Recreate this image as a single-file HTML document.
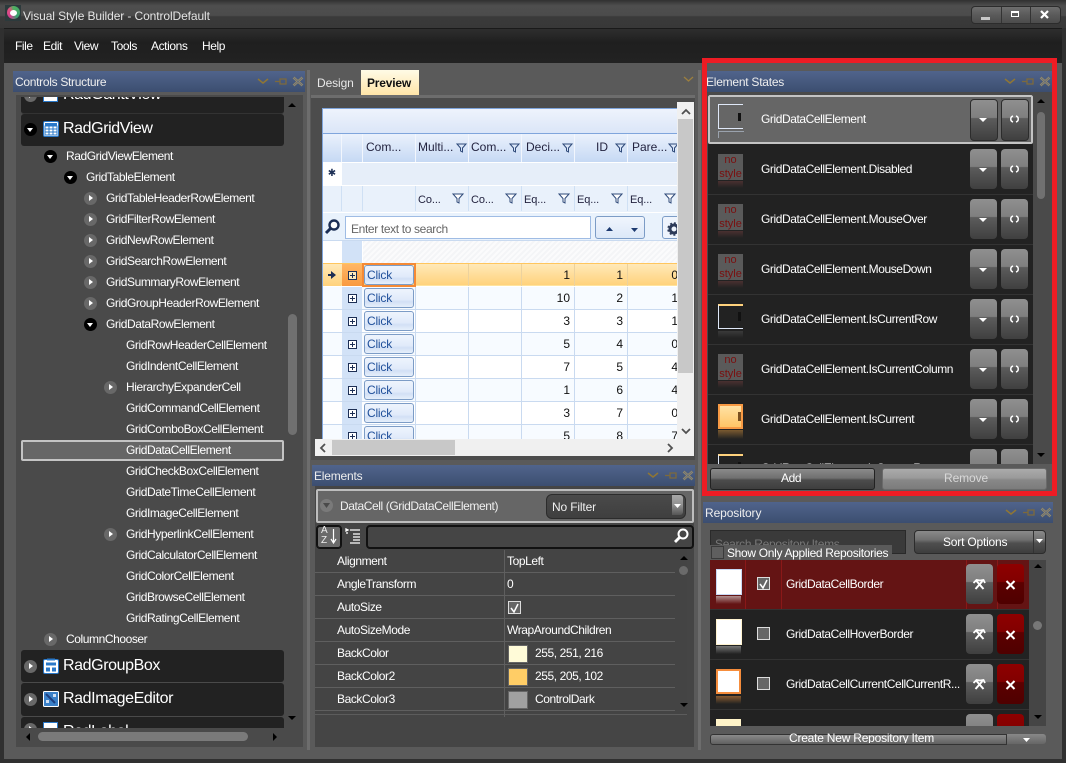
<!DOCTYPE html>
<html><head><meta charset="utf-8"><title>Visual Style Builder</title>
<style>
html,body{margin:0;padding:0;background:#303030}
#w{position:relative;width:1066px;height:763px;overflow:hidden;background:#303030;font-family:"Liberation Sans",sans-serif;font-size:12px;color:#fff}
#w div,#w span,#w svg{position:absolute;display:block}
.t{white-space:nowrap;line-height:16px;letter-spacing:-.42px;color:#fff}
.l{font-size:16px;line-height:20px;letter-spacing:-.4px}
.h{height:21px;background:linear-gradient(#50648c,#3c4e70)}
.h svg{right:0;top:0}
.c{width:13px;height:13px;border-radius:50%}
.k{background:#000}.g{background:#686868}
.k:after{content:"";position:absolute;left:3px;top:5px;border:solid transparent;border-width:4px 3.5px 0;border-top-color:#fff}
.g:after{content:"";position:absolute;left:5px;top:3px;border:solid transparent;border-width:3.5px 0 3.5px 4px;border-left-color:#fff}
.d{background:#222;border-radius:3px;left:21px;width:263px}
.b{width:27px;height:40px;border-radius:4px;background:linear-gradient(#8f8f8f,#7f7f7f 44%,#5c5c5c 46%,#3f3f3f)}
.r{background:linear-gradient(#8e0000,#820000 44%,#5c0000 46%,#4f0000)}
.rw{left:708px;width:325px;height:49px;background:#222;border-bottom:1px solid #333}
.ns{left:10px;top:9px;width:25px;height:26px;background:#5a5a5a;color:#7a1010;font-size:11px;line-height:13.5px;text-align:center}
.rf{left:10px;top:36px;width:25px;height:7px;background:linear-gradient(#4a3030,#222)}
.cell{top:0;height:22px;border-right:1px solid #c9daf0}
.row{left:0;width:355px;height:22px;border-bottom:1px solid #c9daf0}
.cl{left:41px;top:1px;width:48px;height:18px;border:1px solid #7c9cc6;border-radius:3px;background:linear-gradient(#eef4fd,#e0eafa 60%,#d2e0f5 70%,#e6effb);color:#1f4f9a;font-size:12px;line-height:18px;text-indent:2px;letter-spacing:-.2px}
.ex{left:25px;top:7px;width:7px;height:7px;border:1px solid #1d2f55;background:#fff}
.ex:before{content:"";position:absolute;left:1px;top:3px;width:5px;height:1px;background:#1d2f55}
.ex:after{content:"";position:absolute;left:3px;top:1px;width:1px;height:5px;background:#1d2f55}
.n{color:#111;text-align:right;width:30px;line-height:22px;letter-spacing:0}
.hc{top:0;height:28px;background:linear-gradient(#eaf1fc,#c6d9f4);border-right:1px solid #f2f6fd;color:#23233f;line-height:26px;letter-spacing:0;white-space:nowrap}
.fc{top:0;height:25px;border-right:1px solid #cfe0f4;color:#23233f;line-height:28px;white-space:nowrap;text-indent:2px;letter-spacing:-.1px;font-size:11px}
.pl{left:315px;width:360px;height:1px;background:#5f5f5f}
.sw{left:508px;width:18px;height:16px;border:1px solid #666}
.cb{width:11px;height:11px;border:1px solid #ddd;background:#666}
</style></head><body><div id="w">
<svg width="0" height="0" style="width:0;height:0"><defs>
<symbol id="hi" viewBox="0 0 50 21"><path d="M3 8l5 4 5-4" fill="none" stroke="#8f7635" stroke-width="1.500"/><path d="M20 10.500h5M25 8h6v5h-6z" fill="none" stroke="#7d6a3c" stroke-width="1.300"/><path d="M38.500 6.500l9 8M47.500 6.500l-9 8" stroke="#a08f60" stroke-width="2.400"/><path d="M38.500 6.500l9 8M47.500 6.500l-9 8" stroke="#50648c" stroke-width=".7"/></symbol>
<symbol id="dn" viewBox="0 0 27 40"><path d="M9 19h8l-4 4z" fill="#fff"/></symbol>
<symbol id="rf" viewBox="0 0 27 40"><path d="M12 17c-3 1-3 5 0 6M15 17c3 1 3 5 0 6" fill="none" stroke="#fff" stroke-width="1.500"/></symbol>
<symbol id="tl" viewBox="0 0 27 40"><path d="M9.500 25l7-8M17.500 25l-7-8" stroke="#fff" stroke-width="2" fill="none"/><path d="M7.500 19l3-3 3.500.5M14 16.500l3.500-.5 1.500 3" stroke="#fff" stroke-width="1.800" fill="none"/></symbol>
<symbol id="xx" viewBox="0 0 27 40"><path d="M9.500 17l8 8M17.500 17l-8 8" stroke="#fff" stroke-width="2"/></symbol>
</defs></svg>

<!-- title bar -->
<div style="left:0;top:0;width:1066px;height:28px;background:linear-gradient(#303030,#4e4e4e 20%,#4c4c4c 55%,#3a3a3a 60%,#383838)"></div>
<div style="left:5px;top:5px;width:16px;height:16px;background:#2c3a3c"></div>
<div style="left:7px;top:6px;width:13px;height:13px;border-radius:50%;background:conic-gradient(#50b060,#3aa070 40%,#d04090 60%,#e05080 85%,#50b060)"></div>
<div style="left:10px;top:10px;width:7px;height:6px;border-radius:50%;background:#fff"></div>
<div class="t" style="left:23px;top:8px;color:#e4e4e4;letter-spacing:-.1px">Visual Style Builder - ControlDefault</div>
<div style="left:971px;top:6px;width:88px;height:16px;border:1px solid #2c2c2c;border-radius:4px;background:linear-gradient(#6e6e6e,#5a5a5a 50%,#4c4c4c)"></div>
<div style="left:1001px;top:7px;width:1px;height:16px;background:#333"></div>
<div style="left:1030px;top:7px;width:1px;height:16px;background:#333"></div>
<div style="left:981px;top:17px;width:9px;height:3px;background:#c8c8c8"></div>
<div style="left:1011px;top:11px;border:1px solid #fff;border-top-width:2px;width:6px;height:3px"></div>
<svg style="left:1040px;top:10px" width="9" height="9"><path d="M1 1l7 7M8 1l-7 7" stroke="#fff" stroke-width="2.200"/></svg>

<!-- menu -->
<div style="left:4px;top:28px;width:1058px;height:34px;background:linear-gradient(#2e2e2e,#1f1f1f 40%,#222);border-top:1px solid #1a1a1a"></div>
<div class="t" style="left:15px;top:38px">File</div>
<div class="t" style="left:43px;top:38px">Edit</div>
<div class="t" style="left:74px;top:38px">View</div>
<div class="t" style="left:111px;top:38px">Tools</div>
<div class="t" style="left:151px;top:38px">Actions</div>
<div class="t" style="left:202px;top:38px">Help</div>

<!-- main bg -->
<div style="left:4px;top:63px;width:1058px;height:696px;background:#5a5a5a"></div>
<div style="left:307px;top:70px;width:3px;height:680px;background:#6d6d6d"></div>
<div style="left:698px;top:70px;width:3px;height:680px;background:#6d6d6d"></div>

<!-- left panel -->
<div class="h" style="left:13px;top:71px;width:292px"><svg width="50" height="21"><use href="#hi"/></svg></div>
<div class="t" style="left:15px;top:74px;color:#eee;letter-spacing:-.3px">Controls Structure</div>
<div style="left:16px;top:95px;width:287px;height:652px;background:#4a4a4a"></div>
<div style="left:16px;top:97px;width:268px;height:631px;overflow:hidden">
 <div class="d" style="left:5px;top:-5px;width:263px;height:21px;border-bottom:1px solid #333"></div>
 <div class="c g" style="left:8px;top:-8px"></div>
 <div style="left:27px;top:-9px;width:13px;height:12px;background:#fff;border:1px solid #2a78c8"></div>
 <div class="t l" style="left:47px;top:-12px">RadGanttView</div>
 <div class="d" style="left:5px;top:17px;width:263px;height:32px"></div>
 <div class="c k" style="left:8px;top:26px"></div>
 <svg style="left:27px;top:24px" width="16" height="16"><rect x=".5" y=".5" width="15" height="15" rx="1.500" fill="#fff" stroke="#2a78c8"/><path d="M2 2h12v3H2z" fill="#2a78c8"/><path d="M2 5h12v9H2zM2 8h12M2 11h12M6 5v9M10 5v9" fill="none" stroke="#2a78c8"/></svg>
 <div class="t l" style="left:47px;top:22px">RadGridView</div>
</div>
<div class="c k" style="left:44px;top:150px"></div><div class="t" style="left:66px;top:148px">RadGridViewElement</div>
<div class="c k" style="left:64px;top:171px"></div><div class="t" style="left:86px;top:169px">GridTableElement</div>
<div class="c g" style="left:84px;top:192px"></div><div class="t" style="left:106px;top:190px">GridTableHeaderRowElement</div>
<div class="c g" style="left:84px;top:213px"></div><div class="t" style="left:106px;top:211px">GridFilterRowElement</div>
<div class="c g" style="left:84px;top:234px"></div><div class="t" style="left:106px;top:232px">GridNewRowElement</div>
<div class="c g" style="left:84px;top:255px"></div><div class="t" style="left:106px;top:253px">GridSearchRowElement</div>
<div class="c g" style="left:84px;top:276px"></div><div class="t" style="left:106px;top:274px">GridSummaryRowElement</div>
<div class="c g" style="left:84px;top:297px"></div><div class="t" style="left:106px;top:295px">GridGroupHeaderRowElement</div>
<div class="c k" style="left:84px;top:318px"></div><div class="t" style="left:106px;top:316px">GridDataRowElement</div>
<div class="t" style="left:126px;top:337px">GridRowHeaderCellElement</div>
<div class="t" style="left:126px;top:358px">GridIndentCellElement</div>
<div class="c g" style="left:104px;top:381px"></div><div class="t" style="left:126px;top:379px">HierarchyExpanderCell</div>
<div class="t" style="left:126px;top:400px">GridCommandCellElement</div>
<div class="t" style="left:126px;top:421px">GridComboBoxCellElement</div>
<div style="left:21px;top:440px;width:259px;height:17px;background:#666;border:2px solid #c4c4c4;border-radius:2px"></div>
<div class="t" style="left:126px;top:442px">GridDataCellElement</div>
<div class="t" style="left:126px;top:463px">GridCheckBoxCellElement</div>
<div class="t" style="left:126px;top:484px">GridDateTimeCellElement</div>
<div class="t" style="left:126px;top:505px">GridImageCellElement</div>
<div class="c g" style="left:104px;top:528px"></div><div class="t" style="left:126px;top:526px">GridHyperlinkCellElement</div>
<div class="t" style="left:126px;top:547px">GridCalculatorCellElement</div>
<div class="t" style="left:126px;top:568px">GridColorCellElement</div>
<div class="t" style="left:126px;top:589px">GridBrowseCellElement</div>
<div class="t" style="left:126px;top:610px">GridRatingCellElement</div>
<div class="c g" style="left:44px;top:633px"></div><div class="t" style="left:66px;top:631px">ColumnChooser</div>
<div class="d" style="top:650px;height:32px"></div>
<div class="c g" style="left:24px;top:660px"></div>
<svg style="left:43px;top:658px" width="16" height="16"><rect x=".5" y="1.500" width="15" height="14" rx="1.500" fill="#fff" stroke="#2a78c8"/><path d="M4 .5h8v2H4z" fill="#2a78c8"/><path d="M3 4.500h10v3H3z" fill="#2a78c8"/><path d="M3 9.500h4v4H3zM9 9.500h4v4H9z" fill="#2a78c8"/></svg>
<div class="t l" style="left:63px;top:656px">RadGroupBox</div>
<div class="d" style="top:683px;height:33px"></div>
<div class="c g" style="left:24px;top:693px"></div>
<svg style="left:43px;top:691px" width="16" height="16"><rect x=".5" y=".5" width="15" height="15" rx="1" fill="#3a80c8" stroke="#fff"/><path d="M3 3l9 9" stroke="#1d3f80" stroke-width="2"/><path d="M3 12h3v-3H3zM10 3h3v3h-3z" fill="#cfe0f4"/></svg>
<div class="t l" style="left:63px;top:689px">RadImageEditor</div>
<div style="left:21px;top:717px;width:263px;height:11px;overflow:hidden;background:#222;border-radius:3px 3px 0 0">
 <div class="c g" style="left:3px;top:6px"></div>
 <div style="left:22px;top:5px;width:13px;height:13px;background:#fff;border:1px solid #2a78c8"></div>
 <div class="t l" style="left:42px;top:5px">RadLabel</div>
</div>
<svg style="left:287px;top:102px" width="10" height="6"><path d="M1 5h8L5 1z" fill="#000"/></svg>
<svg style="left:287px;top:715px" width="10" height="6"><path d="M1 1h8L5 5z" fill="#000"/></svg>
<div style="left:288px;top:314px;width:9px;height:121px;border-radius:5px;background:#707070"></div>
<svg style="left:25px;top:732px" width="6" height="10"><path d="M5 1v8L1 5z" fill="#000"/></svg>
<svg style="left:272px;top:732px" width="6" height="10"><path d="M1 1v8l4-4z" fill="#000"/></svg>
<div style="left:38px;top:732px;width:210px;height:9px;border-radius:5px;background:#7a7a7a"></div>

<!-- center tabs -->
<div class="t" style="left:317px;top:75px;color:#e8e8e8;letter-spacing:-.1px">Design</div>
<div style="left:361px;top:70px;width:58px;height:25px;background:linear-gradient(#fffbe6,#ffe5a8)"></div>
<div class="t" style="left:367px;top:75px;color:#111;font-weight:bold;letter-spacing:-.2px">Preview</div>
<svg style="left:683px;top:76px" width="11" height="7"><path d="M1 1l4.500 4 4.500-4" fill="none" stroke="#9c7f3f" stroke-width="1.300"/></svg>
<div style="left:311px;top:95px;width:384px;height:3px;background:#6d6d6d"></div>
<div style="left:311px;top:98px;width:384px;height:362px;background:#4c4c4c"></div>

<!-- grid -->
<div style="left:322px;top:108px;width:355px;height:331px;overflow:hidden;background:#fff;border-left:1px solid #7fa5dc;border-top:1px solid #7fa5dc;box-sizing:border-box">
 <div style="left:0;top:0;width:355px;height:24px;background:linear-gradient(#eef3fc,#dbe6f8);border-bottom:1px solid #7fa5dc"></div>
 <div style="left:0;top:25px;width:355px;height:28px">
  <div class="hc" style="left:0;width:18px"></div>
  <div class="hc" style="left:19px;width:20px"></div>
  <div class="hc" style="left:40px;width:52px;text-indent:3px">Com...</div>
  <div class="hc" style="left:93px;width:52px;text-indent:2px">Multi...</div>
  <div class="hc" style="left:146px;width:52px;text-indent:2px">Com...</div>
  <div class="hc" style="left:199px;width:52px;text-indent:4px">Deci...</div>
  <div class="hc" style="left:252px;width:52px;text-indent:21px">ID</div>
  <div class="hc" style="left:305px;width:52px;text-indent:4px">Pare...</div>
  <svg style="left:133px;top:9px" width="12" height="10"><path d="M1 1h9L6.500 5v4l-2-1V5z" fill="none" stroke="#2f4a7a"/></svg>
  <svg style="left:186px;top:9px" width="12" height="10"><path d="M1 1h9L6.500 5v4l-2-1V5z" fill="none" stroke="#2f4a7a"/></svg>
  <svg style="left:239px;top:9px" width="12" height="10"><path d="M1 1h9L6.500 5v4l-2-1V5z" fill="none" stroke="#2f4a7a"/></svg>
  <svg style="left:292px;top:9px" width="12" height="10"><path d="M1 1h9L6.500 5v4l-2-1V5z" fill="none" stroke="#2f4a7a"/></svg>
  <svg style="left:345px;top:9px" width="12" height="10"><path d="M1 1h9L6.500 5v4l-2-1V5z" fill="none" stroke="#2f4a7a"/></svg>
 </div>
 <div style="left:0;top:54px;width:18px;height:22px;background:#fff;color:#1d2f55;text-align:center;line-height:21px;font-size:10px;font-family:'DejaVu Sans',sans-serif">✱</div>
 <div style="left:19px;top:54px;width:336px;height:22px;background:#e6eef9"></div>
 <div style="left:0;top:77px;width:355px;height:26px;background:#e9f1fb">
  <div class="fc" style="left:0;width:18px"></div><div class="fc" style="left:19px;width:20px"></div><div class="fc" style="left:40px;width:52px"></div>
  <div class="fc" style="left:93px;width:52px">Co...</div><div class="fc" style="left:146px;width:52px">Co...</div>
  <div class="fc" style="left:199px;width:52px">Eq...</div><div class="fc" style="left:252px;width:52px">Eq...</div><div class="fc" style="left:305px;width:52px">Eq...</div>
  <svg style="left:129px;top:7px" width="12" height="11"><path d="M1 1h10L7 5.500v4.500l-2-1V5.500z" fill="#fff" stroke="#2f4a7a"/></svg>
  <svg style="left:182px;top:7px" width="12" height="11"><path d="M1 1h10L7 5.500v4.500l-2-1V5.500z" fill="#fff" stroke="#2f4a7a"/></svg>
  <svg style="left:235px;top:7px" width="12" height="11"><path d="M1 1h10L7 5.500v4.500l-2-1V5.500z" fill="#fff" stroke="#2f4a7a"/></svg>
  <svg style="left:288px;top:7px" width="12" height="11"><path d="M1 1h10L7 5.500v4.500l-2-1V5.500z" fill="#fff" stroke="#2f4a7a"/></svg>
  <svg style="left:341px;top:7px" width="12" height="11"><path d="M1 1h10L7 5.500v4.500l-2-1V5.500z" fill="#fff" stroke="#2f4a7a"/></svg>
 </div>
 <div style="left:0;top:104px;width:355px;height:27px;background:#e9f2fc;border-bottom:1px solid #c9daf0">
  <svg style="left:1px;top:5px" width="17" height="18"><circle cx="10" cy="7" r="4.500" fill="#fff" stroke="#1d2f55" stroke-width="2.400"/><path d="M7 10l-5 5" stroke="#1d2f55" stroke-width="3"/></svg>
  <div style="left:22px;top:3px;width:244px;height:21px;background:#fff;border:1px solid #9fbce4"></div>
  <div class="t" style="left:28px;top:8px;color:#666;letter-spacing:-.36px">Enter text to search</div>
  <div style="left:272px;top:3px;width:24px;height:21px;border:1px solid #7c9cc6;border-radius:3px 0 0 3px;background:linear-gradient(#f0f5fd,#dce8f8)"></div>
  <div style="left:297px;top:3px;width:24px;height:21px;border:1px solid #7c9cc6;border-left:0;border-radius:0 3px 3px 0;background:linear-gradient(#f0f5fd,#dce8f8)"></div>
  <svg style="left:282px;top:13px" width="9" height="6"><path d="M1 5h7L4.500 1z" fill="#1d3a70"/></svg>
  <svg style="left:307px;top:14px" width="9" height="6"><path d="M1 1h7L4.500 5z" fill="#1d3a70"/></svg>
  <div style="left:339px;top:3px;width:26px;height:21px;border:1px solid #7c9cc6;border-radius:3px;background:#eef4fd"></div>
  <svg style="left:344px;top:9px" width="14" height="14"><circle cx="7" cy="7" r="4" fill="none" stroke="#2c3a58" stroke-width="3"/><circle cx="7" cy="7" r="6" fill="none" stroke="#2c3a58" stroke-width="1.500" stroke-dasharray="2 2"/></svg>
 </div>
 <div style="left:19px;top:132px;width:20px;height:22px;background:#d2e2f7"></div>
 <div style="left:40px;top:132px;width:315px;height:22px;background:repeating-linear-gradient(135deg,#f4f5f7 0 2px,#fbfbfc 2px 4px)"></div>

 <div class="row" style="top:154px;height:23px;background:linear-gradient(#ffe9b8,#ffd27c);border-top:1px solid #ffc65e;border-bottom:1px solid #ffe49e;box-sizing:border-box">
  <div style="left:0;top:0;width:18px;height:22px;background:linear-gradient(#ffe9b8,#ffd27c)"></div>
  <svg style="left:5px;top:7px" width="9" height="11"><path d="M0 3h3V0l5 4L3 8V5H0z" fill="#1d2f55"/></svg>
  <div style="left:19px;top:0;width:20px;height:22px;background:linear-gradient(#ffb766,#f99a3f)"></div><div class="ex" style="background:#ffe9b8"></div>
  <div style="left:39px;top:-1px;width:50px;height:20px;border:2px solid #f58a35"></div><div class="cl" style="left:41px;top:1px;height:18px;line-height:18px">Click</div>
  <div class="cell" style="left:145px;width:0;border-color:#ecd29e"></div><div class="cell" style="left:198px;width:0;border-color:#ecd29e"></div><div class="cell" style="left:251px;width:0;border-color:#ecd29e"></div><div class="cell" style="left:304px;width:0;border-color:#ecd29e"></div>
  <div class="n" style="left:217px">1</div><div class="n" style="left:270px">1</div><div class="n" style="left:325px">0</div>
 </div>
 <div class="row" style="top:178px;background:#f7fbff"><div style="left:19px;top:0;width:20px;height:22px;background:#d2e2f7"></div><div class="ex"></div><div class="cl">Click</div><div class="cell" style="left:92px;width:0"></div><div class="cell" style="left:145px;width:0"></div><div class="cell" style="left:198px;width:0"></div><div class="cell" style="left:251px;width:0"></div><div class="cell" style="left:304px;width:0"></div><div class="n" style="left:217px">10</div><div class="n" style="left:270px">2</div><div class="n" style="left:325px">1</div></div>
 <div class="row" style="top:201px;background:#fff"><div style="left:19px;top:0;width:20px;height:22px;background:#d2e2f7"></div><div class="ex"></div><div class="cl">Click</div><div class="cell" style="left:92px;width:0"></div><div class="cell" style="left:145px;width:0"></div><div class="cell" style="left:198px;width:0"></div><div class="cell" style="left:251px;width:0"></div><div class="cell" style="left:304px;width:0"></div><div class="n" style="left:217px">3</div><div class="n" style="left:270px">3</div><div class="n" style="left:325px">1</div></div>
 <div class="row" style="top:224px;background:#f7fbff"><div style="left:19px;top:0;width:20px;height:22px;background:#d2e2f7"></div><div class="ex"></div><div class="cl">Click</div><div class="cell" style="left:92px;width:0"></div><div class="cell" style="left:145px;width:0"></div><div class="cell" style="left:198px;width:0"></div><div class="cell" style="left:251px;width:0"></div><div class="cell" style="left:304px;width:0"></div><div class="n" style="left:217px">5</div><div class="n" style="left:270px">4</div><div class="n" style="left:325px">0</div></div>
 <div class="row" style="top:247px;background:#fff"><div style="left:19px;top:0;width:20px;height:22px;background:#d2e2f7"></div><div class="ex"></div><div class="cl">Click</div><div class="cell" style="left:92px;width:0"></div><div class="cell" style="left:145px;width:0"></div><div class="cell" style="left:198px;width:0"></div><div class="cell" style="left:251px;width:0"></div><div class="cell" style="left:304px;width:0"></div><div class="n" style="left:217px">7</div><div class="n" style="left:270px">5</div><div class="n" style="left:325px">4</div></div>
 <div class="row" style="top:270px;background:#f7fbff"><div style="left:19px;top:0;width:20px;height:22px;background:#d2e2f7"></div><div class="ex"></div><div class="cl">Click</div><div class="cell" style="left:92px;width:0"></div><div class="cell" style="left:145px;width:0"></div><div class="cell" style="left:198px;width:0"></div><div class="cell" style="left:251px;width:0"></div><div class="cell" style="left:304px;width:0"></div><div class="n" style="left:217px">1</div><div class="n" style="left:270px">6</div><div class="n" style="left:325px">4</div></div>
 <div class="row" style="top:293px;background:#fff"><div style="left:19px;top:0;width:20px;height:22px;background:#d2e2f7"></div><div class="ex"></div><div class="cl">Click</div><div class="cell" style="left:92px;width:0"></div><div class="cell" style="left:145px;width:0"></div><div class="cell" style="left:198px;width:0"></div><div class="cell" style="left:251px;width:0"></div><div class="cell" style="left:304px;width:0"></div><div class="n" style="left:217px">3</div><div class="n" style="left:270px">7</div><div class="n" style="left:325px">0</div></div>
 <div class="row" style="top:316px;background:#f7fbff"><div style="left:19px;top:0;width:20px;height:22px;background:#d2e2f7"></div><div class="ex"></div><div class="cl">Click</div><div class="cell" style="left:92px;width:0"></div><div class="cell" style="left:145px;width:0"></div><div class="cell" style="left:198px;width:0"></div><div class="cell" style="left:251px;width:0"></div><div class="cell" style="left:304px;width:0"></div><div class="n" style="left:217px">5</div><div class="n" style="left:270px">8</div><div class="n" style="left:325px">7</div></div>
</div>
<!-- grid scrollbars -->
<div style="left:677px;top:102px;width:17px;height:354px;background:#f0f0f0"></div>
<div style="left:678px;top:119px;width:15px;height:254px;background:#c8c8c8"></div>
<svg style="left:681px;top:108px" width="10" height="7"><path d="M1 6l4-4 4 4" fill="none" stroke="#505050" stroke-width="1.800"/></svg>
<svg style="left:681px;top:428px" width="10" height="7"><path d="M1 1l4 4 4-4" fill="none" stroke="#505050" stroke-width="1.800"/></svg>
<div style="left:315px;top:439px;width:379px;height:17px;background:#f0f0f0"></div>
<div style="left:332px;top:440px;width:123px;height:15px;background:#c8c8c8"></div>
<svg style="left:319px;top:443px" width="7" height="10"><path d="M6 1L2 5l4 4" fill="none" stroke="#505050" stroke-width="1.800"/></svg>
<svg style="left:667px;top:443px" width="7" height="10"><path d="M1 1l4 4-4 4" fill="none" stroke="#505050" stroke-width="1.800"/></svg>

<!-- elements panel -->
<div class="h" style="left:312px;top:465px;width:383px"><svg width="50" height="21"><use href="#hi"/></svg></div>
<div class="t" style="left:314px;top:468px;color:#eee;letter-spacing:-.2px">Elements</div>
<div style="left:315px;top:486px;width:379px;height:261px;background:#454545"></div>
<div style="left:316px;top:489px;width:374px;height:30px;background:#666;border:2px solid #bdbdbd;border-radius:2px"></div>
<div class="c" style="left:320px;top:499px;background:#7a7a7a"></div>
<svg style="left:322px;top:502px" width="9" height="7"><path d="M1 1h7L4.500 6z" fill="#4a4a4a"/></svg>
<div class="t" style="left:340px;top:498px;color:#f0f0f0;letter-spacing:-.4px">DataCell (GridDataCellElement)</div>
<div style="left:546px;top:494px;width:138px;height:23px;border:1px solid #2c2c2c;border-radius:6px;background:linear-gradient(#4a4a4a,#3f3f3f)"></div>
<div style="left:672px;top:495px;width:11px;height:20px;border-radius:0 3px 3px 0;background:linear-gradient(#a8a8a8,#909090 50%,#555)"></div>
<svg style="left:673px;top:504px" width="9" height="5"><path d="M1 0h7L4.500 4z" fill="#fff"/></svg>
<div class="t" style="left:552px;top:499px;color:#f0f0f0;letter-spacing:-.15px">No Filter</div>
<div style="left:317px;top:526px;width:22px;height:20px;border:1px solid #111;border-radius:3px;background:#6a6a6a;outline:1px solid #111"></div>
<div class="t" style="left:321px;top:526px;font-size:10px;line-height:10px;letter-spacing:0;color:#eee">A<br>Z</div>
<svg style="left:330px;top:528px" width="7" height="17"><path d="M3.500 1v13M1 11l2.500 4L6 11" fill="none" stroke="#fff" stroke-width="1.200"/></svg>
<svg style="left:345px;top:528px" width="16" height="16"><path d="M5 2h10M8 6h7M8 9h7M8 12h7M5 15h10M1 1l2 1-2 1zM1 5h2" stroke="#fff" stroke-width="1.300" fill="none"/></svg>
<div style="left:366px;top:525px;width:324px;height:20px;border:2px solid #111;border-radius:4px;background:#454545"></div>
<svg style="left:673px;top:527px" width="17" height="18"><circle cx="10" cy="7" r="4.500" fill="none" stroke="#fff" stroke-width="2"/><path d="M7 10l-5 5" stroke="#fff" stroke-width="2.800"/></svg>
<div style="left:315px;top:549px;width:372px;height:165px;background:#444;border-bottom:1px solid #5c5c5c"></div>
<div style="left:504px;top:550px;width:1px;height:167px;background:#5f5f5f"></div>
<div class="pl" style="top:572px"></div><div class="pl" style="top:595px"></div><div class="pl" style="top:618px"></div><div class="pl" style="top:641px"></div><div class="pl" style="top:664px"></div><div class="pl" style="top:687px"></div><div class="pl" style="top:710px"></div>
<div class="t" style="left:337px;top:553px">Alignment</div><div class="t" style="left:507px;top:553px">TopLeft</div>
<div class="t" style="left:337px;top:576px">AngleTransform</div><div class="t" style="left:507px;top:576px">0</div>
<div class="t" style="left:337px;top:599px">AutoSize</div>
<div class="cb" style="left:508px;top:601px"></div><svg style="left:509px;top:602px" width="12" height="12"><path d="M2 6l3 4 4-8" fill="none" stroke="#fff" stroke-width="1.500"/></svg>
<div class="t" style="left:337px;top:622px">AutoSizeMode</div><div class="t" style="left:507px;top:622px">WrapAroundChildren</div>
<div class="t" style="left:337px;top:645px">BackColor</div><div class="sw" style="top:645px;background:#fffbd8"></div><div class="t" style="left:535px;top:645px">255, 251, 216</div>
<div class="t" style="left:337px;top:668px">BackColor2</div><div class="sw" style="top:668px;background:#ffcd66"></div><div class="t" style="left:535px;top:668px">255, 205, 102</div>
<div class="t" style="left:337px;top:691px">BackColor3</div><div class="sw" style="top:691px;background:#a0a0a0"></div><div class="t" style="left:535px;top:691px">ControlDark</div>
<svg style="left:679px;top:555px" width="10" height="6"><path d="M1 5h8L5 1z" fill="#000"/></svg>
<svg style="left:679px;top:702px" width="10" height="6"><path d="M1 1h8L5 5z" fill="#000"/></svg>
<div class="c" style="left:679px;top:566px;width:9px;height:9px;background:#6a6a6a"></div>

<!-- element states -->
<div class="h" style="left:707px;top:71px;width:345px"><svg width="50" height="21"><use href="#hi"/></svg></div>
<div class="t" style="left:706px;top:74px;color:#eee;letter-spacing:-.24px">Element States</div>
<div style="left:707px;top:92px;width:345px;height:372px;background:#4a4a4a"></div>
<div style="left:708px;top:95px;width:325px;height:369px;background:#222;overflow:hidden">
 <div class="rw" style="left:0;top:0;width:321px;height:45px;background:#666;border:2px solid #c4c4c4;border-radius:2px">
  <div style="left:8px;top:7px;width:24px;height:23px;border:1px solid #dfe8f8;border-right:0"></div>
  <div style="left:8px;top:34px;width:25px;height:6px;border:1px solid #9aa2ad;border-right:0;border-bottom:0"></div>
  <div style="left:28px;top:16px;width:3px;height:8px;background:#111"></div>
 </div>
 <div class="rw" style="left:0;top:50px"><div class="ns">no<br>style</div><div class="rf"></div></div>
 <div class="rw" style="left:0;top:100px"><div class="ns">no<br>style</div><div class="rf"></div></div>
 <div class="rw" style="left:0;top:150px"><div class="ns">no<br>style</div><div class="rf"></div></div>
 <div class="rw" style="left:0;top:200px">
  <div style="left:10px;top:9px;width:25px;height:25px;border:1px solid #dfe8f8;border-top:2px solid #ffd27c;border-right:0;box-sizing:border-box"></div>
  <div style="left:30px;top:17px;width:3px;height:9px;background:#111"></div>
  <div class="rf" style="background:linear-gradient(#3a3a3a,#222)"></div>
 </div>
 <div class="rw" style="left:0;top:250px"><div class="ns">no<br>style</div><div class="rf"></div></div>
 <div class="rw" style="left:0;top:300px">
  <div style="left:10px;top:9px;width:25px;height:25px;background:linear-gradient(#ffe2a4,#ffc566);border:2px solid #f89a44;box-sizing:border-box"></div>
  <div style="left:30px;top:17px;width:3px;height:9px;background:#7a5020"></div>
  <div class="rf" style="top:35px;height:9px;background:linear-gradient(#7a5a30,#222)"></div>
 </div>
 <div class="rw" style="left:0;top:350px">
  <div style="left:10px;top:9px;width:25px;height:25px;border:1px solid #dfe8f8;border-top:2px solid #ffd27c;border-right:0;box-sizing:border-box"></div>
  <div style="left:30px;top:17px;width:3px;height:6px;background:#111"></div>
 </div>
 <div class="t" style="left:53px;top:365px">GridRowCellElement.IsCurrentRow</div>
 <div class="b" style="left:262px;top:354px"></div><div class="b" style="left:293px;top:354px"></div>
</div>
<div class="t" style="left:761px;top:111px">GridDataCellElement</div>
<div class="t" style="left:761px;top:161px">GridDataCellElement.Disabled</div>
<div class="t" style="left:761px;top:211px">GridDataCellElement.MouseOver</div>
<div class="t" style="left:761px;top:261px">GridDataCellElement.MouseDown</div>
<div class="t" style="left:761px;top:311px">GridDataCellElement.IsCurrentRow</div>
<div class="t" style="left:761px;top:361px">GridDataCellElement.IsCurrentColumn</div>
<div class="t" style="left:761px;top:411px">GridDataCellElement.IsCurrent</div>
<div class="b" style="left:970px;top:99px;border:1px solid #2c2c2c;width:26px"></div><svg class="b0" style="left:970px;top:99px" width="27" height="40"><use href="#dn"/></svg>
<div class="b" style="left:1001px;top:99px;border:1px solid #2c2c2c;width:26px"></div><svg style="left:1001px;top:99px" width="27" height="40"><use href="#rf"/></svg>
<div class="b" style="left:970px;top:149px"></div><svg style="left:970px;top:149px" width="27" height="40"><use href="#dn"/></svg><div class="b" style="left:1001px;top:149px"></div><svg style="left:1001px;top:149px" width="27" height="40"><use href="#rf"/></svg>
<div class="b" style="left:970px;top:199px"></div><svg style="left:970px;top:199px" width="27" height="40"><use href="#dn"/></svg><div class="b" style="left:1001px;top:199px"></div><svg style="left:1001px;top:199px" width="27" height="40"><use href="#rf"/></svg>
<div class="b" style="left:970px;top:249px"></div><svg style="left:970px;top:249px" width="27" height="40"><use href="#dn"/></svg><div class="b" style="left:1001px;top:249px"></div><svg style="left:1001px;top:249px" width="27" height="40"><use href="#rf"/></svg>
<div class="b" style="left:970px;top:299px"></div><svg style="left:970px;top:299px" width="27" height="40"><use href="#dn"/></svg><div class="b" style="left:1001px;top:299px"></div><svg style="left:1001px;top:299px" width="27" height="40"><use href="#rf"/></svg>
<div class="b" style="left:970px;top:349px"></div><svg style="left:970px;top:349px" width="27" height="40"><use href="#dn"/></svg><div class="b" style="left:1001px;top:349px"></div><svg style="left:1001px;top:349px" width="27" height="40"><use href="#rf"/></svg>
<div class="b" style="left:970px;top:399px"></div><svg style="left:970px;top:399px" width="27" height="40"><use href="#dn"/></svg><div class="b" style="left:1001px;top:399px"></div><svg style="left:1001px;top:399px" width="27" height="40"><use href="#rf"/></svg>
<svg style="left:1036px;top:98px" width="10" height="6"><path d="M1 5h8L5 1z" fill="#000"/></svg>
<svg style="left:1036px;top:452px" width="10" height="6"><path d="M1 1h8L5 5z" fill="#000"/></svg>
<div style="left:1037px;top:112px;width:8px;height:87px;border-radius:4px;background:#707070"></div>
<div style="left:707px;top:464px;width:345px;height:27px;background:#5a5a5a"></div>
<div style="left:710px;top:468px;width:163px;height:20px;border:1px solid #222;border-radius:3px;background:linear-gradient(#8a8a8a,#707070 45%,#4c4c4c 55%,#3e3e3e)"></div>
<div class="t" style="left:781px;top:470px">Add</div>
<div style="left:882px;top:468px;width:163px;height:20px;border:1px solid #6a6a6a;border-radius:3px;background:linear-gradient(#ababab,#9a9a9a 45%,#888 55%,#7c7c7c)"></div>
<div class="t" style="left:944px;top:470px;color:#d8d8d8;letter-spacing:-.1px">Remove</div>
<!-- red frame -->
<div style="left:702px;top:58px;width:345px;height:428px;border:5px solid #ed1c24"></div>

<!-- repository -->
<div class="h" style="left:703px;top:502px;width:350px"><svg width="50" height="21"><use href="#hi"/></svg></div>
<div class="t" style="left:705px;top:505px;color:#eee;letter-spacing:-.1px">Repository</div>
<div style="left:710px;top:530px;width:196px;height:24px;background:#3a3a3a;border:1px solid #2a2a2a;box-sizing:border-box"></div>
<div class="t" style="left:715px;top:536px;color:#777;letter-spacing:-.3px">Search Repository Items</div>
<div style="left:914px;top:530px;width:132px;height:24px;box-sizing:border-box;border:1px solid #2c2c2c;border-radius:4px;background:linear-gradient(#8a8a8a,#707070 40%,#4f4f4f 55%,#3e3e3e)"></div>
<div style="left:1033px;top:531px;width:1px;height:22px;background:#333"></div>
<div class="t" style="left:943px;top:534px;letter-spacing:-.2px">Sort Options</div>
<svg style="left:1035px;top:539px" width="9" height="5"><path d="M1 0h7L4.500 4z" fill="#fff"/></svg>
<div style="left:710px;top:545px;width:182px;height:16px;background:#5a5a5a"></div>
<div class="cb" style="left:711px;top:546px;border-color:#3a3a3a;background:#5f5f5f"></div>
<div class="t" style="left:727px;top:545px;letter-spacing:-.32px">Show Only Applied Repositories</div>
<div style="left:710px;top:560px;width:336px;height:166px;background:#454545"></div>
<div style="left:710px;top:560px;width:319px;height:166px;background:#222;overflow:hidden">
 <div style="left:0;top:0;width:319px;height:49px;background:#641414;border-bottom:1px solid #333"></div>
 <div style="left:35px;top:0;width:1px;height:49px;background:#8a1818"></div>
 <div style="left:71px;top:0;width:1px;height:49px;background:#8a1818"></div>
 <div style="left:256px;top:0;width:1px;height:49px;background:#8a1818"></div>
 <div style="left:287px;top:0;width:1px;height:49px;background:#8a1818"></div>
 <div style="left:6px;top:9px;width:24px;height:24px;background:#fff;border:1px solid #c8d8f4"></div>
 <div style="left:6px;top:36px;width:25px;height:8px;background:linear-gradient(#b09090,#641414)"></div>
 <div style="left:0;top:99px;width:319px;height:1px;background:#333"></div>
 <div style="left:0;top:149px;width:319px;height:1px;background:#333"></div>
 <div style="left:6px;top:59px;width:24px;height:24px;background:#fff;border:1px solid #fff3d0"></div>
 <div style="left:6px;top:86px;width:25px;height:8px;background:linear-gradient(#777,#222)"></div>
 <div style="left:6px;top:109px;width:25px;height:25px;background:#fff;border:2px solid #f68d3c;box-sizing:border-box"></div>
 <div style="left:6px;top:136px;width:25px;height:8px;background:linear-gradient(#8a5a30,#222)"></div>
 <div style="left:6px;top:159px;width:25px;height:8px;background:#fff3c8"></div>
 <div class="b" style="left:256px;top:154px"></div>
 <div class="b r" style="left:287px;top:154px"></div>
</div>
<div class="cb" style="left:757px;top:577px;background:#666"></div><svg style="left:758px;top:578px" width="12" height="12"><path d="M2 6l3 4 4-8" fill="none" stroke="#fff" stroke-width="1.500"/></svg>
<div class="cb" style="left:757px;top:627px"></div>
<div class="cb" style="left:757px;top:677px"></div>
<div class="t" style="left:786px;top:576px">GridDataCellBorder</div>
<div class="t" style="left:786px;top:626px">GridDataCellHoverBorder</div>
<div class="t" style="left:786px;top:676px">GridDataCellCurrentCellCurrentR...</div>
<div class="b" style="left:966px;top:564px"></div><svg style="left:966px;top:564px" width="27" height="40"><use href="#tl"/></svg>
<div class="b r" style="left:997px;top:564px"></div><svg style="left:997px;top:564px" width="27" height="40"><use href="#xx"/></svg>
<div class="b" style="left:966px;top:614px"></div><svg style="left:966px;top:614px" width="27" height="40"><use href="#tl"/></svg>
<div class="b r" style="left:997px;top:614px"></div><svg style="left:997px;top:614px" width="27" height="40"><use href="#xx"/></svg>
<div class="b" style="left:966px;top:664px"></div><svg style="left:966px;top:664px" width="27" height="40"><use href="#tl"/></svg>
<div class="b r" style="left:997px;top:664px"></div><svg style="left:997px;top:664px" width="27" height="40"><use href="#xx"/></svg>
<svg style="left:1033px;top:563px" width="10" height="6"><path d="M1 5h8L5 1z" fill="#000"/></svg>
<svg style="left:1033px;top:714px" width="10" height="6"><path d="M1 1h8L5 5z" fill="#000"/></svg>
<div class="c" style="left:1033px;top:621px;width:9px;height:9px;background:#777"></div>
<div style="left:710px;top:734px;width:295px;height:9px;border:1px solid #333;border-radius:3px 0 0 3px;background:linear-gradient(#8a8a8a,#606060);box-sizing:content-box"></div>
<div style="left:1007px;top:734px;width:39px;height:10px;background:linear-gradient(#888,#666);border-radius:0 3px 3px 0"></div>
<svg style="left:1022px;top:738px" width="9" height="5"><path d="M1 0h7L4.500 4z" fill="#fff"/></svg>
<div style="left:710px;top:731px;width:300px;height:12px;overflow:hidden"><div class="t" style="left:79px;top:-1px;letter-spacing:-.22px">Create New Repository Item</div></div>
</div></body></html>
